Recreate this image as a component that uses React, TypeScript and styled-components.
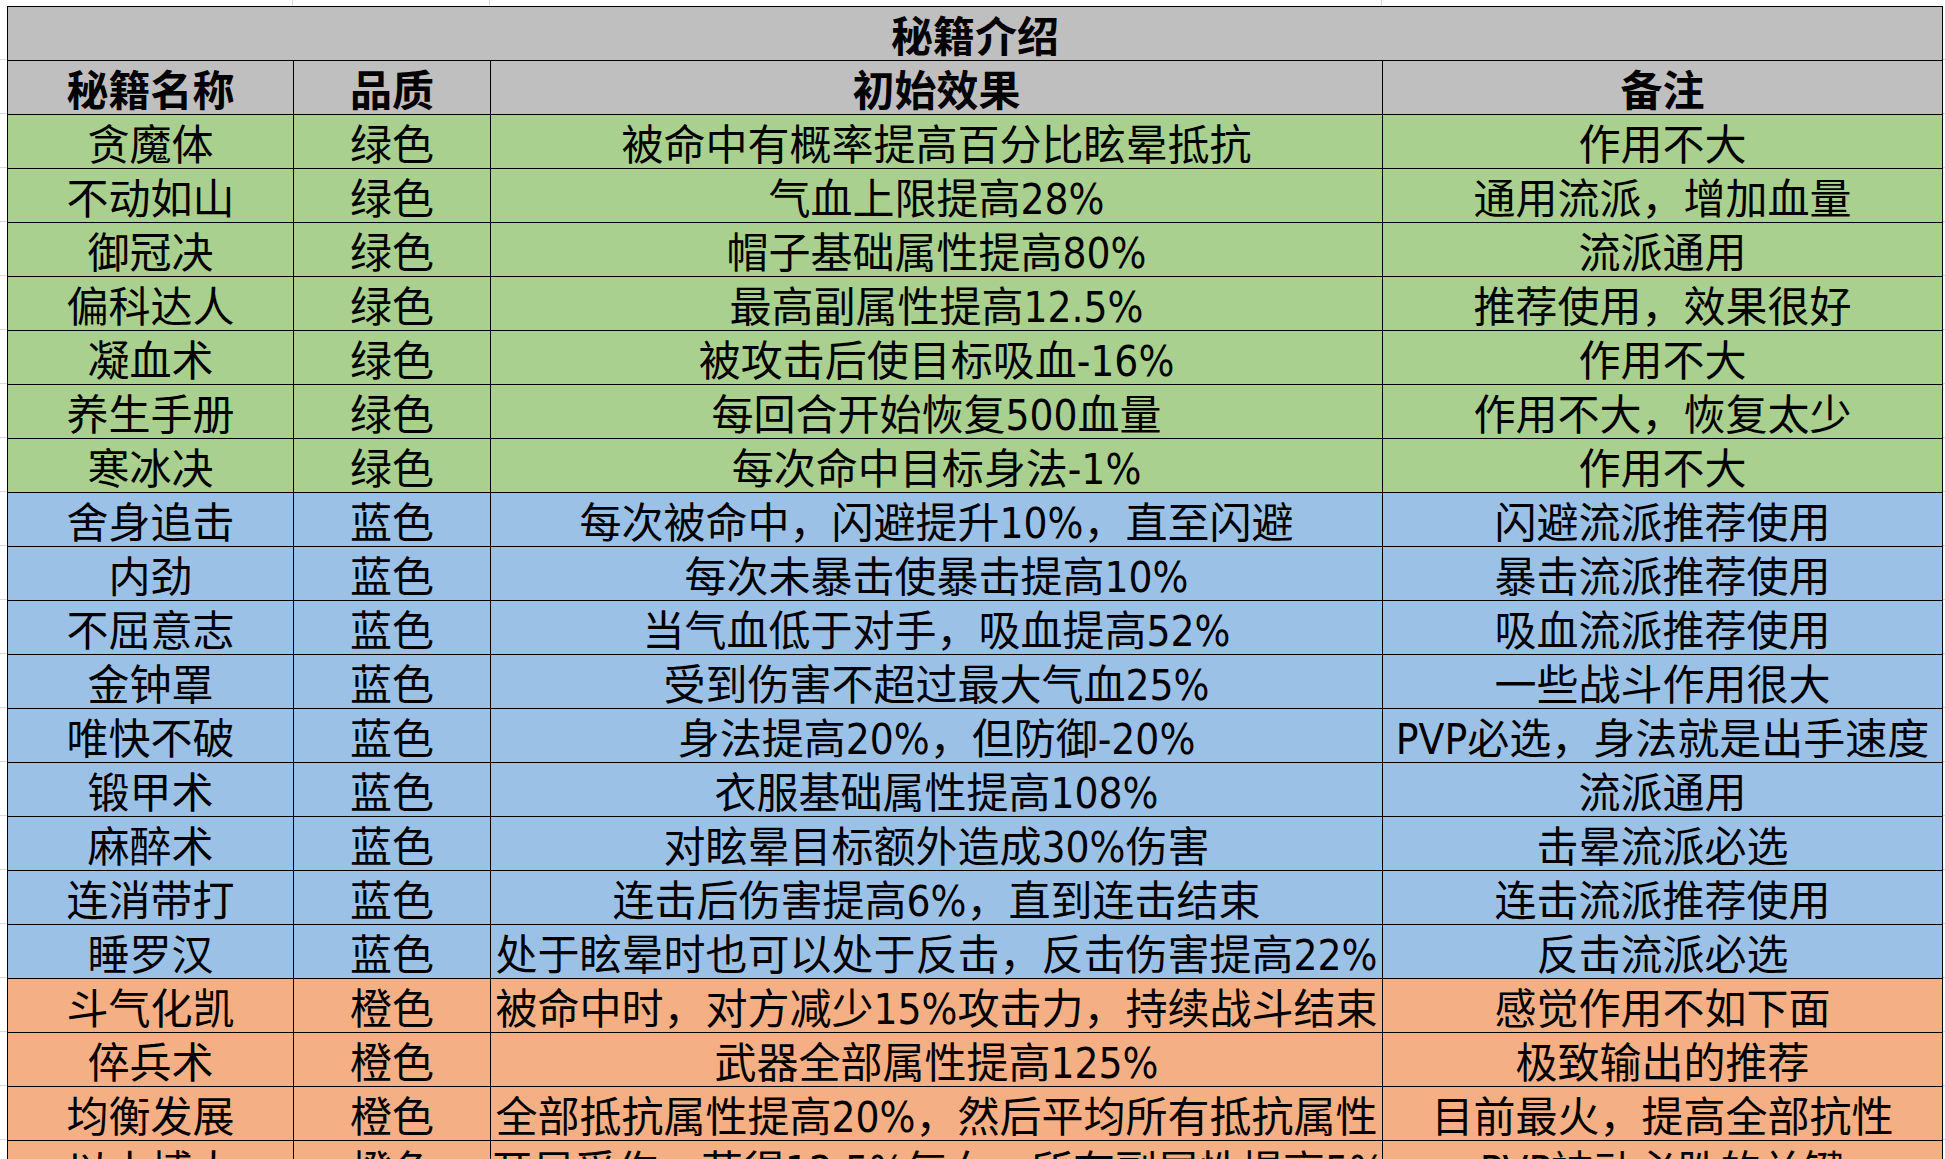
import React from 'react';
import styled, { createGlobalStyle } from 'styled-components';

type Tone = 'green' | 'blue' | 'orange';

const tones: Record<Tone, string> = {
  green: '#a9d08e',
  blue: '#9bc2e6',
  orange: '#f4b084',
};

const GlobalStyle = createGlobalStyle`
  html, body {
    margin: 0;
    padding: 0;
    background: #fff;
    overflow: hidden;
  }
  body {
    font-family: "Liberation Sans Narrow", "DejaVu Sans Condensed", "Noto Sans CJK SC", sans-serif;
    color: #000;
  }
`;

// faint spreadsheet grid that peeks out above and left of the table
const Sheet = styled.div`
  width: 1945px;
  height: 1159px;
  overflow: hidden;
  box-sizing: border-box;
  padding: 6px 0 0 7px;
  background-color: #fff;
  background-image:
    linear-gradient(to right, transparent 292px, #d9d9d9 292px, #d9d9d9 293px, transparent 293px),
    linear-gradient(to right, transparent 489px, #d9d9d9 489px, #d9d9d9 490px, transparent 490px),
    linear-gradient(to right, transparent 1381px, #d9d9d9 1381px, #d9d9d9 1382px, transparent 1382px),
    repeating-linear-gradient(to bottom, transparent 0, transparent 53px, #d9d9d9 53px, #d9d9d9 54px);
  background-position: 0 0, 0 0, 0 0, 0 6px;
`;

const Table = styled.table`
  width: 1936px;
  table-layout: fixed;
  border-collapse: collapse;
`;

const Row = styled.tr<{ $tone?: Tone }>`
  height: 54px;
  background: ${(p) => (p.$tone ? tones[p.$tone] : '#bfbfbf')};
`;

const Cell = styled.td`
  border: 1px solid #000;
  padding: 8px 0 0;
  height: 45px;
  line-height: 45px;
  font-size: 42px;
  text-align: center;
  vertical-align: top;
  white-space: nowrap;
  overflow: hidden;
`;

const HeadCell = styled(Cell).attrs({ as: 'th' })`
  font-weight: 700;
`;

const columns = ['秘籍名称', '品质', '初始效果', '备注'];
const widths = [286, 197, 892, 560];

const rows: [string, string, string, string, Tone][] = [
  ['贪魔体', '绿色', '被命中有概率提高百分比眩晕抵抗', '作用不大', 'green'],
  ['不动如山', '绿色', '气血上限提高28%', '通用流派，增加血量', 'green'],
  ['御冠决', '绿色', '帽子基础属性提高80%', '流派通用', 'green'],
  ['偏科达人', '绿色', '最高副属性提高12.5%', '推荐使用，效果很好', 'green'],
  ['凝血术', '绿色', '被攻击后使目标吸血-16%', '作用不大', 'green'],
  ['养生手册', '绿色', '每回合开始恢复500血量', '作用不大，恢复太少', 'green'],
  ['寒冰决', '绿色', '每次命中目标身法-1%', '作用不大', 'green'],
  ['舍身追击', '蓝色', '每次被命中，闪避提升10%，直至闪避', '闪避流派推荐使用', 'blue'],
  ['内劲', '蓝色', '每次未暴击使暴击提高10%', '暴击流派推荐使用', 'blue'],
  ['不屈意志', '蓝色', '当气血低于对手，吸血提高52%', '吸血流派推荐使用', 'blue'],
  ['金钟罩', '蓝色', '受到伤害不超过最大气血25%', '一些战斗作用很大', 'blue'],
  ['唯快不破', '蓝色', '身法提高20%，但防御-20%', 'PVP必选，身法就是出手速度', 'blue'],
  ['锻甲术', '蓝色', '衣服基础属性提高108%', '流派通用', 'blue'],
  ['麻醉术', '蓝色', '对眩晕目标额外造成30%伤害', '击晕流派必选', 'blue'],
  ['连消带打', '蓝色', '连击后伤害提高6%，直到连击结束', '连击流派推荐使用', 'blue'],
  ['睡罗汉', '蓝色', '处于眩晕时也可以处于反击，反击伤害提高22%', '反击流派必选', 'blue'],
  ['斗气化凯', '橙色', '被命中时，对方减少15%攻击力，持续战斗结束', '感觉作用不如下面', 'orange'],
  ['倅兵术', '橙色', '武器全部属性提高125%', '极致输出的推荐', 'orange'],
  ['均衡发展', '橙色', '全部抵抗属性提高20%，然后平均所有抵抗属性', '目前最火，提高全部抗性', 'orange'],
  ['以小搏大', '橙色', '开局受伤，获得12.5%气血，所有副属性提高5%', 'PVP被动必胜的关键', 'orange'],
];

export default function App() {
  return (
    <>
      <GlobalStyle />
      <Sheet>
        <Table>
          <colgroup>
            {widths.map((w) => (
              <col key={w} style={{ width: w }} />
            ))}
          </colgroup>
          <thead>
            <Row>
              <HeadCell colSpan={4}>秘籍介绍</HeadCell>
            </Row>
            <Row>
              {columns.map((c) => (
                <HeadCell key={c}>{c}</HeadCell>
              ))}
            </Row>
          </thead>
          <tbody>
            {rows.map(([name, grade, effect, note, tone]) => (
              <Row key={name} $tone={tone}>
                <Cell>{name}</Cell>
                <Cell>{grade}</Cell>
                <Cell>{effect}</Cell>
                <Cell>{note}</Cell>
              </Row>
            ))}
          </tbody>
        </Table>
      </Sheet>
    </>
  );
}
